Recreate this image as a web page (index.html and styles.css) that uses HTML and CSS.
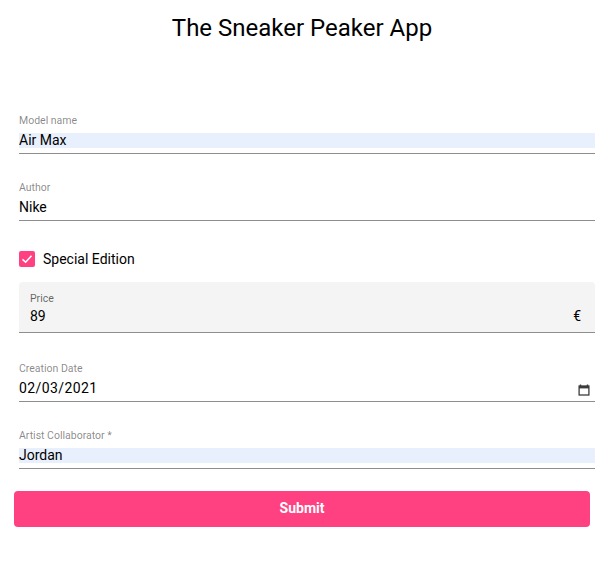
FILE: index.html
```html
<!DOCTYPE html>
<html>
<head>
<meta charset="utf-8">
<link rel="stylesheet" href="styles.css">
</head>
<body>
<div class="page">
  <h1 class="title">The Sneaker Peaker App</h1>
  <form class="form">
    <div class="field first">
      <div class="label">Model name</div>
      <div class="value autofill">Air Max</div>
      <div class="line"></div>
    </div>
    <div class="field">
      <div class="label">Author</div>
      <div class="value">Nike</div>
      <div class="line"></div>
    </div>
    <div class="check">
      <span class="box">
        <svg width="16" height="16" viewBox="0 0 16 16"><path d="M3.5 8.3 L6.6 11.2 L12.5 4.8" fill="none" stroke="#fff" stroke-width="1.6"/></svg>
      </span>
      <span class="check-label">Special Edition</span>
    </div>
    <div class="filled">
      <div class="label dark">Price</div>
      <div class="value row"><span>89</span><span class="suffix">€</span></div>
    </div>
    <div class="field date">
      <div class="label">Creation Date</div>
      <div class="value row"><span class="date-text">02/03/2021</span>
        <svg class="cal" width="12" height="12" viewBox="0 0 12 12"><path d="M2.5 0.5 V2 M9.5 0.5 V2" stroke="#3c3c3c" stroke-width="1.4"/><rect x="1.1" y="2" width="9.8" height="9" fill="none" stroke="#3c3c3c" stroke-width="1.3"/><rect x="1" y="2" width="10" height="2.4" fill="#3c3c3c"/></svg>
      </div>
      <div class="line"></div>
    </div>
    <div class="field">
      <div class="label">Artist Collaborator *</div>
      <div class="value autofill">Jordan</div>
      <div class="line"></div>
    </div>
    <button type="button" class="submit">Submit</button>
  </form>
</div>
</body>
</html>
```

FILE: styles.css
```css
html, body {
  margin: 0;
  padding: 0;
  background: #fff;
}
body {
  font-family: Roboto, "Helvetica Neue", sans-serif;
  color: rgba(0, 0, 0, 0.87);
}
.page {
  padding: 12px 0 0 14px;
  width: 576px;
}
.title {
  margin: 0;
  font-size: 24px;
  line-height: 32px;
  font-weight: 400;
  text-align: center;
  color: #000;
}
.form {
  display: flex;
  flex-direction: column;
}
.field {
  margin-left: 5px;
  width: 576px;
  margin-top: 28px;
}
.field.first {
  margin-top: 71px;
}
.field.date {
  margin-top: 30px;
}
.label {
  font-size: 10.5px;
  line-height: 12px;
  height: 12px;
  margin-bottom: 6px;
  color: rgba(0, 0, 0, 0.48);
}
.label.dark {
  color: rgba(0, 0, 0, 0.6);
  margin-bottom: 4px;
}
.value {
  font-size: 14px;
  line-height: 15px;
  height: 15px;
  color: #000;
}
.autofill {
  background: #e8f0fe;
}
.row {
  display: flex;
  justify-content: space-between;
  align-items: center;
}
.line {
  margin-top: 5px;
  border-top: 1px solid #8e8e8e;
}
.check {
  margin: 30px 0 0 5px;
  display: flex;
  align-items: center;
  gap: 8px;
  height: 16px;
}
.box {
  width: 16px;
  height: 16px;
  border-radius: 2px;
  background: #ff4081;
  display: flex;
}
.check-label {
  font-size: 14px;
  line-height: 16px;
  color: #000;
}
.filled {
  margin: 15px 0 0 5px;
  width: 576px;
  box-sizing: border-box;
  background: #f4f4f4;
  border-radius: 4px 4px 0 0;
  border-bottom: 1px solid #8e8e8e;
  padding: 11px 14px 8px 11px;
}
.suffix {
  font-size: 14px;
}
.date-text {
  letter-spacing: 0.4px;
}
.cal {
  margin-right: 5px;
  margin-top: 2px;
}
.submit {
  margin-top: 22px;
  width: 576px;
  height: 36px;
  line-height: 34px;
  border: none;
  border-radius: 4px;
  background: #ff4081;
  color: #fff;
  font-family: Roboto, sans-serif;
  font-size: 14px;
  font-weight: 700;
  padding: 0 0 2px;
}
```
